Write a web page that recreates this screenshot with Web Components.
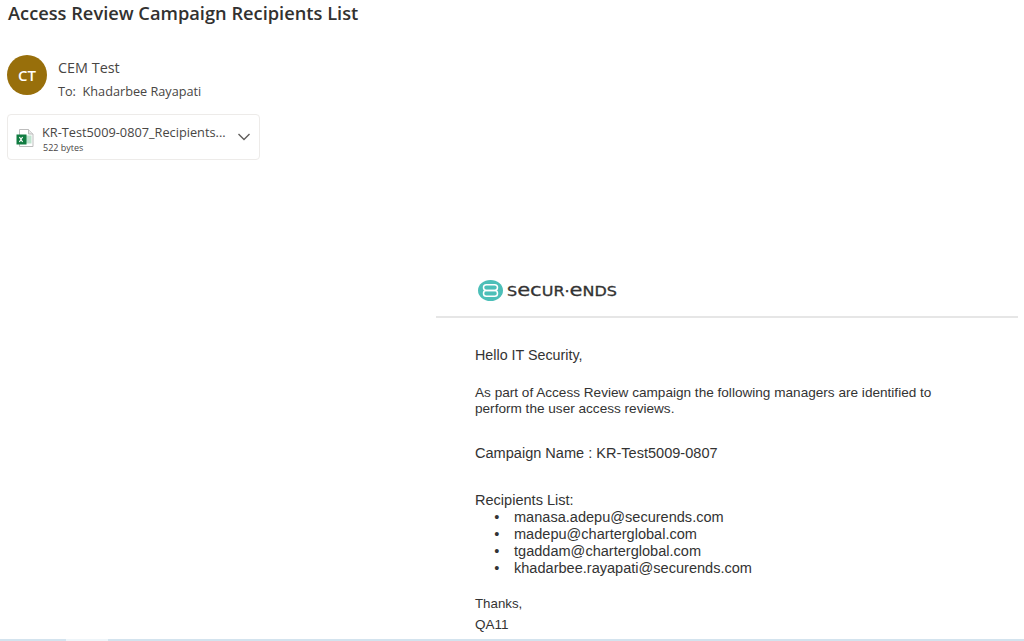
<!DOCTYPE html>
<html lang="en">
<head>
<meta charset="utf-8">
<title>Access Review Campaign Recipients List</title>
<style>
    html, body {
        margin: 0;
        background: #fff;
    }
    body {
        display: flex;
        flex-direction: column;
        height: 641px;
        overflow: hidden;
    }
    mail-view {
        flex: 1;
    }
    li::marker {
        content: "•\2002\2002";
    }
</style>
</head>
<body>
<mail-view>
    <mail-header slot="header" subject="Access Review Campaign Recipients List" initials="CT" sender="CEM Test" to="Khadarbee Rayapati"></mail-header>
    <mail-attachment slot="header" name="KR-Test5009-0807_Recipients..." size="522 bytes"></mail-attachment>
    <mail-body slot="body">
        <p class="hello">Hello IT Security,</p>
        <p class="intro">As part of Access Review campaign the following managers are identified to perform the user access reviews.</p>
        <p class="campaign">Campaign Name : KR-Test5009-0807</p>
        <p class="list-title">Recipients List:</p>
        <ul>
            <li>manasa.adepu@securends.com</li>
            <li>madepu@charterglobal.com</li>
            <li>tgaddam@charterglobal.com</li>
            <li>khadarbee.rayapati@securends.com</li>
        </ul>
        <p class="thanks">Thanks,</p>
        <p class="sign">QA11</p>
    </mail-body>
</mail-view>
<scroll-edge></scroll-edge>

<script>
customElements.define(
    'mail-view',
    class extends HTMLElement {
        constructor() {
            super();

            this.attachShadow({ mode: 'open' }).innerHTML =
                `<style>
                    :host {
                        display: block;
                        min-height: 0;
                    }
                    .head {
                        padding: 0 0 0 7px;
                    }
                    .content {
                        margin: 120px 0 0 436px;
                        width: 582px;
                    }
                </style>
                <div class="head"><slot name="header"></slot></div>
                <div class="content"><slot name="body"></slot></div>
                `;
        }
    }
);

customElements.define(
    'mail-header',
    class extends HTMLElement {
        constructor() {
            super();

            this.attachShadow({ mode: 'open' }).innerHTML =
                `<style>
                    :host {
                        display: block;
                        font-family: "Open Sans", "Noto Sans", sans-serif;
                        color: #323130;
                    }
                    h1 {
                        margin: 0 0 0 1px;
                        padding-top: 1px;
                        font-size: 18.25px;
                        line-height: 24px;
                        font-weight: 600;
                    }
                    .from {
                        display: flex;
                        gap: 11px;
                        margin-top: 30px;
                    }
                    .avatar {
                        flex: none;
                        width: 40px;
                        height: 40px;
                        border-radius: 50%;
                        background: #986f0b;
                        color: #fff;
                        font-size: 15px;
                        font-weight: 600;
                        display: flex;
                        align-items: center;
                        justify-content: center;
                    }
                    .sender {
                        font-size: 14.4px;
                        line-height: 20px;
                        margin-top: 3px;
                        color: #484644;
                    }
                    .to {
                        font-size: 12.7px;
                        line-height: 20px;
                        margin-top: 3px;
                        color: #484644;
                    }
                </style>
                <h1></h1>
                <div class="from">
                    <div class="avatar"></div>
                    <div>
                        <div class="sender"></div>
                        <div class="to"></div>
                    </div>
                </div>
                `;
        }

        connectedCallback() {
            const root = this.shadowRoot;

            root.querySelector('h1').textContent = this.getAttribute('subject');
            root.querySelector('.avatar').textContent = this.getAttribute('initials');
            root.querySelector('.sender').textContent = this.getAttribute('sender');
            root.querySelector('.to').textContent = 'To:\u00a0 ' + this.getAttribute('to');
        }
    }
);

customElements.define(
    'mail-attachment',
    class extends HTMLElement {
        constructor() {
            super();

            this.attachShadow({ mode: 'open' }).innerHTML =
                `<style>
                    :host {
                        display: flex;
                        align-items: center;
                        box-sizing: border-box;
                        width: 253px;
                        height: 46px;
                        margin-top: 13px;
                        padding: 0 8px;
                        border: 1px solid #edebe9;
                        border-radius: 4px;
                        font-family: "Open Sans", "Noto Sans", sans-serif;
                        color: #484644;
                    }
                    svg {
                        flex: none;
                    }
                    .file {
                        margin-top: 2px;
                    }
                    .text {
                        flex: 1;
                        margin-left: 7px;
                        padding-top: 3px;
                    }
                    .name {
                        font-size: 12.75px;
                        line-height: 16px;
                    }
                    .size {
                        font-size: 9px;
                        line-height: 12px;
                        margin-left: 1px;
                        margin-top: 2px;
                    }
                </style>
                <svg class="file" width="19" height="20" viewBox="0 0 19 20">
                    <path d="M3.5 1.5h9l4.5 4.5v12.5h-13.5z" fill="#fff" stroke="#bdbdbd"/>
                    <path d="M12.5 1.5v4.5h4.5" fill="#e6e6e6" stroke="#bdbdbd"/>
                    <rect x="10" y="7.5" width="5.5" height="8" fill="#bfe3cf"/>
                    <rect x="0.5" y="6.5" width="10" height="10" fill="#107c41"/>
                    <path d="M3.4 9l3.2 5M6.6 9l-3.2 5" stroke="#fff" stroke-width="1.2"/>
                </svg>
                <div class="text">
                    <div class="name"></div>
                    <div class="size"></div>
                </div>
                <svg class="chev" width="14" height="8" viewBox="0 0 14 8">
                    <path d="M1.5 1l5.5 5.5L12.5 1" fill="none" stroke="#605e5c" stroke-width="1.4"/>
                </svg>
                `;
        }

        connectedCallback() {
            this.shadowRoot.querySelector('.name').textContent = this.getAttribute('name');
            this.shadowRoot.querySelector('.size').textContent = this.getAttribute('size');
        }
    }
);

customElements.define(
    'secur-logo',
    class extends HTMLElement {
        constructor() {
            super();

            this.attachShadow({ mode: 'open' }).innerHTML =
                `<style>
                    :host {
                        display: block;
                        height: 22px;
                    }
                    svg {
                        display: block;
                    }
                    text {
                        font-family: "DejaVu Sans", sans-serif;
                        font-size: 14px;
                        fill: #333;
                        stroke: #333;
                        stroke-width: .3px;
                    }
                    .low {
                        font-size: 18.5px;
                    }
                </style>
                <svg width="142" height="22" viewBox="0 0 142 22">
                    <ellipse cx="12.5" cy="10.5" rx="12.5" ry="10.5" fill="#4cbfb8"/>
                    <rect x="5.5" y="4.8" width="14" height="5.6" rx="2.8" fill="none" stroke="#fff" stroke-width="1.5"/>
                    <rect x="5.5" y="10.6" width="14" height="5.6" rx="2.8" fill="none" stroke="#fff" stroke-width="1.5"/>
                    <text x="29" y="16" textLength="110" lengthAdjust="spacingAndGlyphs">S<tspan class="low">ec</tspan>UR·<tspan class="low">e</tspan>NDS</text>
                </svg>
                `;
        }
    }
);

customElements.define(
    'mail-body',
    class extends HTMLElement {
        constructor() {
            super();

            this.attachShadow({ mode: 'open' }).innerHTML =
                `<style>
                    :host {
                        display: block;
                    }
                    .logo {
                        padding: 0 0 14px 42px;
                        border-bottom: 2px solid #e6e6e6;
                    }
                    .copy {
                        padding: 29px 0 0 39px;
                        width: 470px;
                        font-family: "Liberation Sans", Arial, sans-serif;
                        font-size: 14.55px;
                        line-height: 17px;
                        color: #333;
                    }
                    ::slotted(p) {
                        margin: 0;
                    }
                    ::slotted(.hello) {
                        font-size: 14.3px;
                    }
                    ::slotted(.intro) {
                        margin-top: 21px;
                        font-size: 13.6px;
                        line-height: 16px;
                    }
                    ::slotted(.campaign) {
                        margin-top: 28px;
                    }
                    ::slotted(.list-title) {
                        margin-top: 30px;
                    }
                    ::slotted(ul) {
                        margin: 0;
                        padding-left: 39px;
                    }
                    ::slotted(.thanks) {
                        margin-top: 18px;
                        font-size: 13.3px;
                    }
                    ::slotted(.sign) {
                        margin-top: 4px;
                        font-size: 13.5px;
                    }
                </style>
                <div class="logo"><secur-logo></secur-logo></div>
                <div class="copy"><slot></slot></div>
                `;
        }
    }
);

customElements.define(
    'scroll-edge',
    class extends HTMLElement {
        constructor() {
            super();

            this.attachShadow({ mode: 'open' }).innerHTML =
                `<style>
                    :host {
                        display: block;
                        flex: none;
                        height: 2px;
                        background: #d3e3ee;
                    }
                    div {
                        width: 42px;
                        height: 100%;
                        margin-left: 66px;
                        background: #eef5f9;
                    }
                </style>
                <div></div>
                `;
        }
    }
);
</script>
</body>
</html>
